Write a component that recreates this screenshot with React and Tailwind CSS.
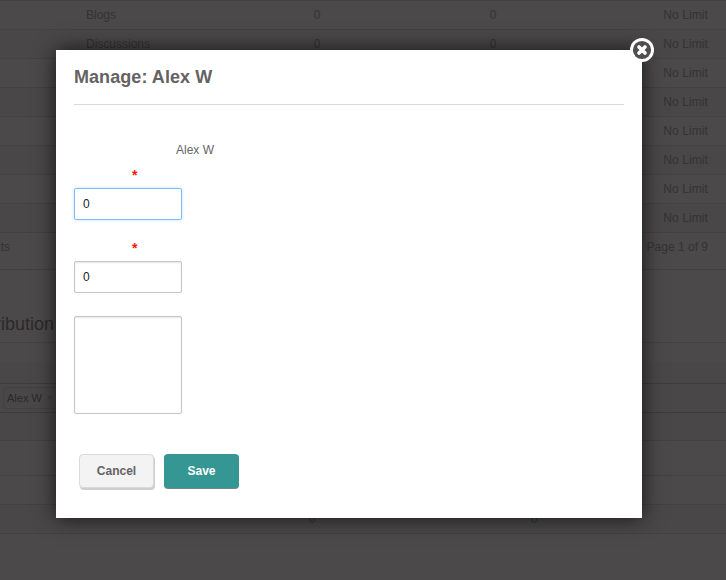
const limits = [
  { name: 'Blogs', used: '0', total: '0' },
  { name: 'Discussions', used: '0', total: '0' },
  { name: '' },
  { name: '' },
  { name: '' },
  { name: '' },
  { name: '' },
  { name: '' },
];

function LimitRow({ name, used, total, shaded }) {
  return (
    <div
      className={`grid h-[29px] shrink-0 grid-cols-[86px_190px_82px_270px_80px] items-center border-t border-[#434141] ${
        shaded ? 'bg-[#494747]' : 'bg-[#4b4949]'
      }`}
    >
      <span />
      <span>{name}</span>
      <span className="text-center">{used}</span>
      <span className="text-center">{total}</span>
      <span className="text-right tracking-[0.08px]">No Limit</span>
    </div>
  );
}

function Background() {
  return (
    <div className="flex h-[580px] w-[726px] flex-col text-[12px] leading-[18px] text-[#353333]">
      {limits.map((row, i) => (
        <LimitRow key={i} {...row} shaded={i % 2 === 1} />
      ))}
      <div className="flex h-[37px] shrink-0 justify-between border-t border-[#424040] pt-[5px] pr-[18px]">
        <span className="-ml-[2px]">its</span>
        <span>Page 1 of 9</span>
      </div>
      <div className="flex h-[73px] shrink-0 items-end border-t border-[#424040] pb-[7px]">
        <h2 className="-ml-[5px] text-[18px] leading-[22px] text-[#2b2929]">ribution</h2>
      </div>
      <div className="h-[19px] shrink-0 border-t border-[#444242]" />
      <div className="h-[22px] shrink-0 bg-[#494747]" />
      <div className="flex h-[29px] shrink-0 items-center border-t border-[#3e3c3c] bg-[#494747] pl-[3px]">
        <div className="flex h-[22px] w-[80px] items-center gap-[5px] rounded-[4px] border border-[#434141] pl-[3px] text-[11px] text-[#2b2929]">
          <span>Alex W</span>
          <span className="text-[10px] text-[#3b3939]">×</span>
        </div>
      </div>
      <div className="h-[28px] shrink-0 border-t border-[#3e3c3c] bg-[#494747]" />
      <div className="h-[35px] shrink-0 border-t border-[#434141]" />
      <div className="h-[29px] shrink-0 border-t border-[#434141]" />
      <div className="grid h-[29px] shrink-0 grid-cols-[271px_82px_140px_82px] items-center border-t border-[#434141] bg-[#494747]">
        <span />
        <span className="text-center">0</span>
        <span />
        <span className="text-center">0</span>
      </div>
      <div className="grow border-t border-[#434141]" />
    </div>
  );
}

function CloseButton() {
  return (
    <button aria-label="Close" className="absolute -top-[12px] -right-[12px] size-6">
      <svg viewBox="0 0 24 24" className="size-6">
        <circle cx="12" cy="12" r="12" fill="#fff" />
        <circle cx="12" cy="12" r="9.1" fill="#504e4f" />
        <path d="M9 9l6 6M15 9l-6 6" stroke="#fff" strokeWidth="3.7" strokeLinecap="round" />
      </svg>
    </button>
  );
}

function Required() {
  return <div className="h-[14px] pl-[58px] text-[14px] leading-[10px] text-[#ff1500] font-bold">*</div>;
}

const field = 'block w-[108px] rounded-[2px] border bg-white px-2 text-[12px] text-[#222] outline-none';

function ManageDialog() {
  return (
    <div className="absolute top-[50px] left-[56px] flex h-[468px] w-[586px] flex-col bg-white px-[18px] shadow-[0_0_20px_rgba(0,0,0,0.7)]">
      <h1 className="h-[55px] border-b border-[#dadada] pt-[15px] text-[18px] leading-[24px] font-bold tracking-[0.06px] text-[#646262]">
        Manage: Alex W
      </h1>
      <div className="mt-[36px] ml-[102px] h-[18px] text-[12px] leading-[18px] text-[#666]">Alex W</div>
      <div className="mt-[11px]">
        <Required />
        <input
          defaultValue="0"
          className={`${field} mt-[4px] h-[32px] border-[#7abcff] shadow-[0_0_3px_rgba(122,188,255,0.5)]`}
        />
      </div>
      <div className="mt-[23px]">
        <Required />
        <input
          defaultValue="0"
          className={`${field} mt-[4px] h-[32px] border-[#c5c5c5] shadow-[inset_0_1px_2px_rgba(0,0,0,0.1)]`}
        />
      </div>
      <textarea
        className={`${field} mt-[23px] h-[98px] resize-none border-[#c5c5c5] shadow-[inset_0_1px_2px_rgba(0,0,0,0.1)]`}
      />
      <div className="mt-[40px] ml-[5px] flex gap-[10px] text-[12px] font-bold">
        <button className="h-[34px] w-[75px] rounded-[4px] border border-[#dadada] bg-[#f3f3f3] text-[#656363] shadow-[1px_2px_0_#cecece]">
          Cancel
        </button>
        <button className="h-[34px] w-[75px] rounded-[4px] bg-[#349794] text-white shadow-[0_1px_0_#6f8b8a]">
          Save
        </button>
      </div>
      <CloseButton />
    </div>
  );
}

export default function App() {
  return (
    <div className="relative h-[580px] w-[726px] overflow-hidden bg-[#4b4949] font-['Liberation_Sans',Arial,sans-serif]">
      <Background />
      <ManageDialog />
    </div>
  );
}
